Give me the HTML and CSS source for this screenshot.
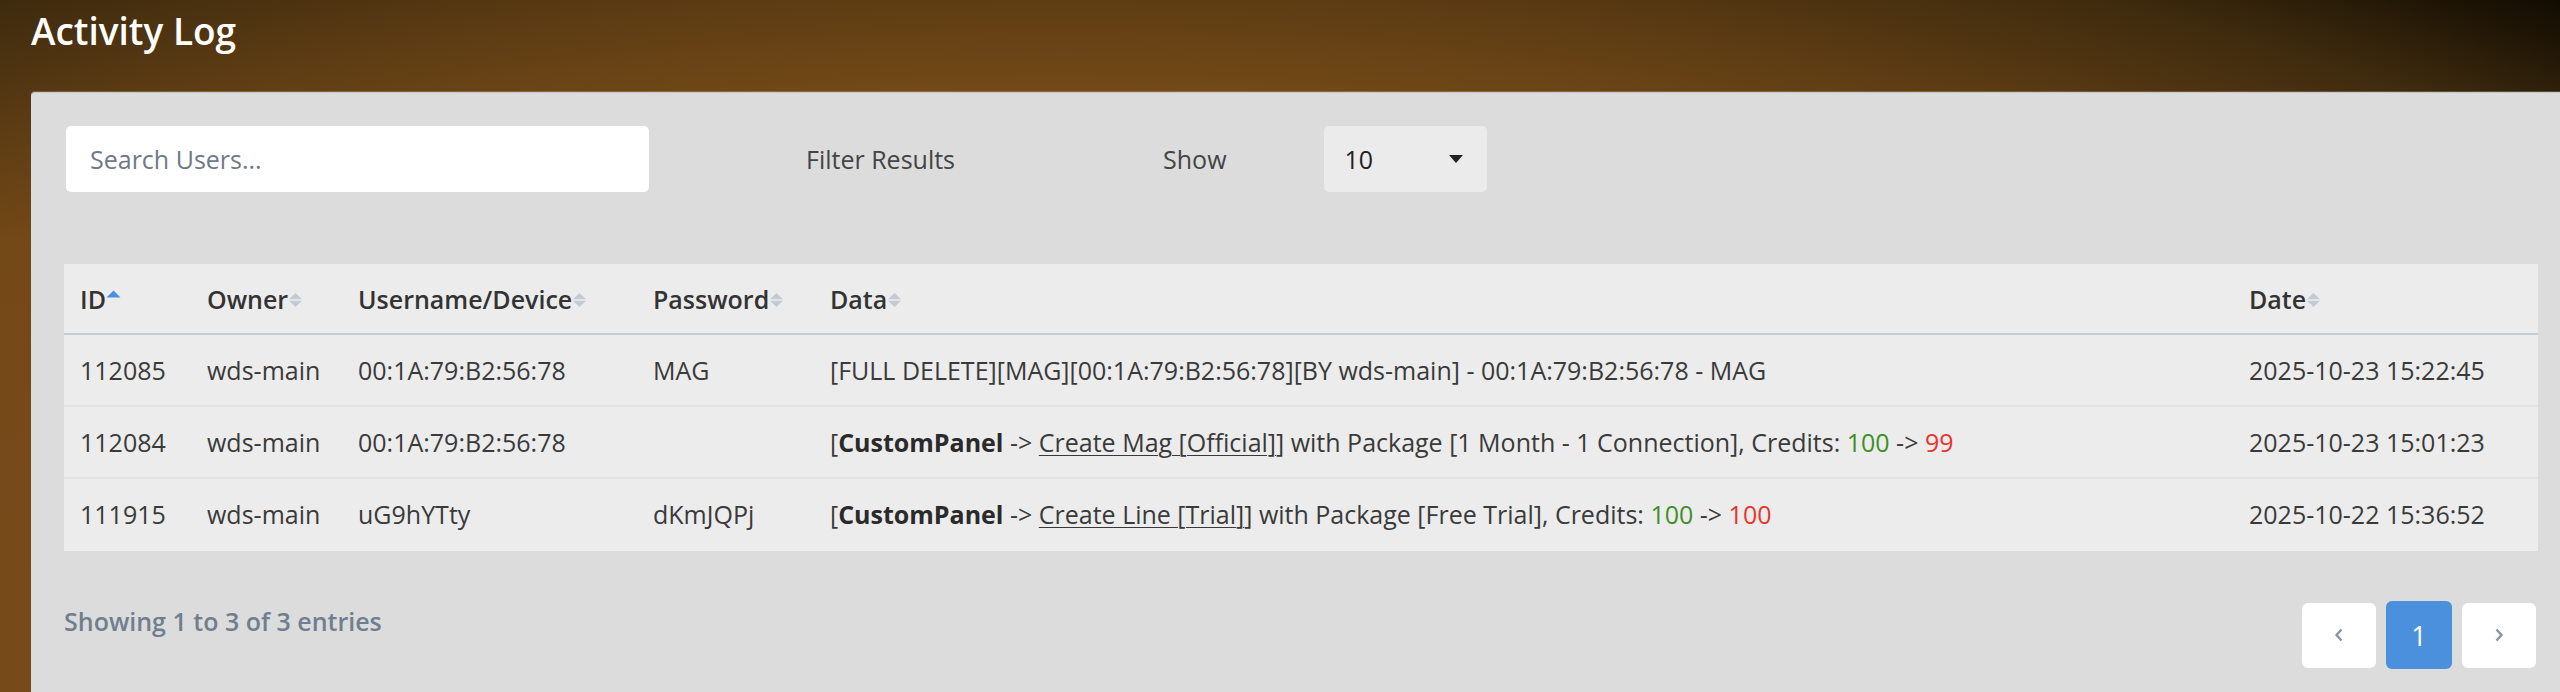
FILE: index.html
```html
<!DOCTYPE html>
<html lang="en">
<head>
<meta charset="utf-8">
<title>Activity Log</title>
<link rel="stylesheet" href="styles.css">
</head>
<body>
<h1 class="page-title">Activity Log</h1>
<main class="card">
  <div class="controls">
    <input class="search" type="text" placeholder="Search Users...">
    <span class="filter-label">Filter Results</span>
    <span class="show-label">Show</span>
    <div class="select"><span>10</span><span class="caret"></span></div>
  </div>

  <table class="log">
    <colgroup>
      <col class="c-id"><col class="c-owner"><col class="c-user"><col class="c-pass"><col class="c-data"><col class="c-date">
    </colgroup>
    <thead>
      <tr>
        <th>ID<svg class="sort" width="15" height="20" viewBox="0 0 15 20"><path d="M0.5 7.5 L7.5 0.5 L14.5 7.5 Z" fill="#4a90dc"/></svg></th>
        <th>Owner<svg class="sort" width="15" height="20" viewBox="0 0 15 20"><path d="M1 9.2 L7.5 3 L14 9.2 Z M1 10.8 L7.5 17 L14 10.8 Z" fill="#c2cad3"/></svg></th>
        <th>Username/Device<svg class="sort" width="15" height="20" viewBox="0 0 15 20"><path d="M1 9.2 L7.5 3 L14 9.2 Z M1 10.8 L7.5 17 L14 10.8 Z" fill="#c2cad3"/></svg></th>
        <th>Password<svg class="sort" width="15" height="20" viewBox="0 0 15 20"><path d="M1 9.2 L7.5 3 L14 9.2 Z M1 10.8 L7.5 17 L14 10.8 Z" fill="#c2cad3"/></svg></th>
        <th>Data<svg class="sort" width="15" height="20" viewBox="0 0 15 20"><path d="M1 9.2 L7.5 3 L14 9.2 Z M1 10.8 L7.5 17 L14 10.8 Z" fill="#c2cad3"/></svg></th>
        <th>Date<svg class="sort" width="15" height="20" viewBox="0 0 15 20"><path d="M1 9.2 L7.5 3 L14 9.2 Z M1 10.8 L7.5 17 L14 10.8 Z" fill="#c2cad3"/></svg></th>
      </tr>
    </thead>
    <tbody>
      <tr>
        <td>112085</td><td>wds-main</td><td>00:1A:79:B2:56:78</td><td>MAG</td>
        <td>[FULL DELETE][MAG][00:1A:79:B2:56:78][BY wds-main] - 00:1A:79:B2:56:78 - MAG</td>
        <td>2025-10-23 15:22:45</td>
      </tr>
      <tr>
        <td>112084</td><td>wds-main</td><td>00:1A:79:B2:56:78</td><td></td>
        <td>[<b>CustomPanel</b> -&gt; <u>Create Mag [Official]</u>] with Package [1 Month - 1 Connection], Credits: <span class="pos">100</span> -&gt; <span class="neg">99</span></td>
        <td>2025-10-23 15:01:23</td>
      </tr>
      <tr>
        <td>111915</td><td>wds-main</td><td>uG9hYTty</td><td>dKmJQPj</td>
        <td>[<b>CustomPanel</b> -&gt; <u>Create Line [Trial]</u>] with Package [Free Trial], Credits: <span class="pos">100</span> -&gt; <span class="neg">100</span></td>
        <td>2025-10-22 15:36:52</td>
      </tr>
    </tbody>
  </table>

  <div class="footer">
    <span class="info">Showing 1 to 3 of 3 entries</span>
    <nav class="pager">
      <a class="pg"><svg width="10" height="14" viewBox="0 0 10 14"><path d="M7.5 1.5 L2.5 7 L7.5 12.5" fill="none" stroke="#8a94a4" stroke-width="2.4"/></svg></a>
      <a class="pg active">1</a>
      <a class="pg"><svg width="10" height="14" viewBox="0 0 10 14"><path d="M2.5 1.5 L7.5 7 L2.5 12.5" fill="none" stroke="#8a94a4" stroke-width="2.4"/></svg></a>
    </nav>
  </div>
</main>
</body>
</html>
```

FILE: styles.css
```css
html, body {
  margin: 0;
  height: 692px;
  overflow: hidden;
}
body {
  font-family: "Open Sans", "Liberation Sans", sans-serif;
  color: #3a3a3a;
  background: radial-gradient(ellipse 2200px 1000px at 1061px 900px,
    #7a4c1a 0%, #774a1a 57%, #734917 81%, #5e3d14 90%, #3d2a0e 102%, #100b02 113%);
}
.page-title {
  margin: 0;
  padding: 8px 31px 0;
  font-size: 37px;
  line-height: 46px;
  font-weight: 600;
  color: #ffffff;
}
.card {
  display: block;
  margin: 38px 0 0 31px;
  padding: 33px 22px 0 33px;
  background: #dcdcdc;
  border-top: 1px solid #c6c6c6;
  border-top-left-radius: 4px;
  box-shadow: 0 -1px 0 rgba(255, 255, 255, 0.18);
  height: 700px;
}
.controls {
  display: flex;
  align-items: center;
  height: 66px;
  padding-left: 2px;
  font-size: 25px;
}
.search {
  box-sizing: border-box;
  width: 583px;
  height: 66px;
  border: 0;
  border-radius: 5px;
  background: #fff;
  padding: 0 24px;
  font-family: "Open Sans", "Liberation Sans", sans-serif;
  font-size: 25px;
  color: #333;
  outline: none;
}
.search::placeholder { color: #6f7986; }
.filter-label {
  margin-left: 157px;
  color: #444;
}
.show-label {
  margin-left: 208px;
  color: #444;
}
.select {
  box-sizing: border-box;
  margin-left: 97px;
  width: 163px;
  height: 66px;
  border-radius: 5px;
  background: #ebebeb;
  display: flex;
  align-items: center;
  justify-content: space-between;
  padding: 0 24px 0 21px;
  color: #222;
}
.caret {
  width: 0;
  height: 0;
  border-left: 7px solid transparent;
  border-right: 7px solid transparent;
  border-top: 8px solid #222;
}
.log {
  margin-top: 72px;
  width: 100%;
  border-collapse: collapse;
  table-layout: fixed;
  background: #ececec;
  font-size: 25px;
}
.c-id { width: 127px; }
.c-owner { width: 151px; }
.c-user { width: 295px; }
.c-pass { width: 177px; }
.c-data { width: 1419px; }
.c-date { width: 305px; }
.log th {
  height: 69px;
  padding: 0 16px;
  text-align: left;
  font-weight: 600;
  color: #333;
  border-bottom: 2px solid #c4ccd6;
  white-space: nowrap;
}
.log td {
  height: 70px;
  padding: 0 16px;
  white-space: nowrap;
  color: #3a3a3a;
  border-bottom: 2px solid #e3e3e3;
}
.log tbody tr:last-child td {
  border-bottom-color: #ececec;
}
.sort {
  vertical-align: -1px;
}
.log b { font-weight: 700; color: #2a2a2a; }
.log u { text-decoration-thickness: 1px; text-underline-offset: 3px; }
.pos { color: #3d8f27; }
.neg { color: #e5352c; }
.footer {
  display: flex;
  justify-content: space-between;
  align-items: flex-start;
  margin-top: 50px;
}
.info {
  margin-top: 3px;
  font-size: 25px;
  line-height: 34px;
  font-weight: 600;
  color: #6f7f8f;
}
.pager {
  display: flex;
  align-items: center;
  gap: 10px;
  margin-right: 2px;
}
.pg {
  box-sizing: border-box;
  width: 74px;
  height: 65px;
  background: #fff;
  border-radius: 6px;
  display: flex;
  align-items: center;
  justify-content: center;
}
.pg.active {
  width: 66px;
  height: 68px;
  background: #4a90dc;
  color: #fff;
  font-size: 27px;
}
```
